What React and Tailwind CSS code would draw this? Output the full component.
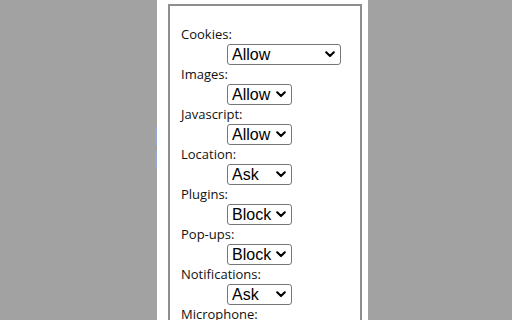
import React from "react";

const rows = [
  { label: "Cookies:", value: "Allow", wide: true },
  { label: "Images:", value: "Allow" },
  { label: "Javascript:", value: "Allow" },
  { label: "Location:", value: "Ask" },
  { label: "Plugins:", value: "Block" },
  { label: "Pop-ups:", value: "Block" },
  { label: "Notifications:", value: "Ask" },
  { label: "Microphone:", value: "Ask" },
];

function Chevron() {
  return (
    <svg width="10" height="7" viewBox="0 0 10 7" className="shrink-0">
      <path d="M1.2 1.3 L5 5 L8.8 1.3" fill="none" stroke="#000" strokeWidth="2.1" strokeLinecap="round" strokeLinejoin="round" />
    </svg>
  );
}

function FakeSelect({ value, wide }) {
  return (
    <div
      className={`${wide ? "w-[114px]" : "w-[65px]"} h-[21px] flex items-center justify-between pl-[4px] pr-[5px] border border-[#767676] rounded-[3px] bg-white text-[16px] leading-none text-black`}
      style={{ fontFamily: '"Liberation Sans", Arial, sans-serif' }}
    >
      <span className="pt-[1px]">{value}</span>
      <Chevron />
    </div>
  );
}

export default function App() {
  return (
    <div className="relative w-[512px] h-[320px] overflow-hidden bg-[#a2a2a2]">
      <div className="absolute left-[155px] top-[127px] w-[2px] h-[18px] bg-[#8fa8d4]" />
      <div className="absolute left-[155px] top-[150px] w-[2px] h-[18px] bg-[#8fa8d4]" />
      <div className="ml-[157px] w-[211px] h-[320px] bg-white pt-[4px] pl-[11px] pr-[6px]">
        <div className="border-2 border-[#8e8e8e] h-[340px] pt-[19px] pl-[11px]">
          {rows.map((r) => (
            <div key={r.label} className="flex flex-col">
              <div
                className="h-[19px] text-[13px] leading-[19px] text-[#111]"
                style={{ fontFamily: '"Open Sans", "Noto Sans", sans-serif' }}
              >
                {r.label}
              </div>
              <div className="pl-[46px]">
                <FakeSelect value={r.value} wide={r.wide} />
              </div>
            </div>
          ))}
        </div>
      </div>
    </div>
  );
}
